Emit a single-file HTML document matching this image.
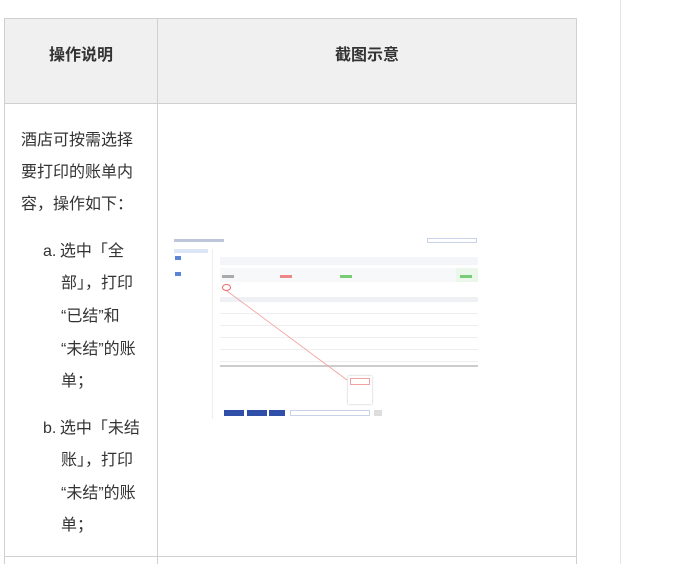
<!DOCTYPE html>
<html><head><meta charset="utf-8"><style>
body{margin:0;width:683px;height:564px;background:#fff;position:relative;overflow:hidden;font-family:"Liberation Sans","Noto Sans CJK SC",sans-serif;color:#333}
.vl{position:absolute;left:620px;top:0;width:1px;height:564px;background:#e5e5e5}
.b{position:absolute;background:#d0d0d0}
.t{position:absolute;font-size:16px;line-height:20px;white-space:nowrap;font-family:"Noto Sans CJK SC","Liberation Sans",sans-serif;color:#333}
.t i{font-style:normal;font-family:"Liberation Sans",sans-serif}
.h{position:absolute;font-size:16px;font-weight:bold;line-height:20px;top:43px;font-family:"Noto Sans CJK SC",sans-serif;color:#333}
</style></head><body>
<div class="vl"></div>
<div style="position:absolute;left:4px;top:18px;width:572px;height:85px;background:#f0f0f0"></div>
<div class="b" style="left:4px;top:18px;width:573px;height:1px"></div>
<div class="b" style="left:4px;top:103px;width:573px;height:1px"></div>
<div class="b" style="left:4px;top:556px;width:573px;height:1px"></div>
<div class="b" style="left:4px;top:18px;width:1px;height:546px"></div>
<div class="b" style="left:157px;top:18px;width:1px;height:546px"></div>
<div class="b" style="left:576px;top:18px;width:1px;height:546px"></div>
<div class="h" style="left:49px">操作说明</div>
<div class="h" style="left:335px">截图示意</div>
<div class="t" style="left:21px;top:128px">酒店可按需选择</div>
<div class="t" style="left:21px;top:160px">要打印的账单内</div>
<div class="t" style="left:21px;top:192px">容，操作如下：</div>
<div class="t" style="left:43px;top:239px"><i>a.</i> 选中「全</div>
<div class="t" style="left:61px;top:271px">部」，打印</div>
<div class="t" style="left:61px;top:304px"><i>“</i>已结<i>”</i>和</div>
<div class="t" style="left:61px;top:337px"><i>“</i>未结<i>”</i>的账</div>
<div class="t" style="left:61px;top:369px">单；</div>
<div class="t" style="left:43px;top:416px"><i>b.</i> 选中「未结</div>
<div class="t" style="left:61px;top:448px">账」，打印</div>
<div class="t" style="left:61px;top:481px"><i>“</i>未结<i>”</i>的账</div>
<div class="t" style="left:61px;top:513px">单；</div>
<div style="position:absolute;left:172px;top:235px;width:306px;height:188px;background:#fff">
 <div style="position:absolute;left:2px;top:4px;width:50px;height:3px;background:#bcc6d8"></div>
 <div style="position:absolute;left:255px;top:3px;width:50px;height:5px;border:1px solid #c8d3ea;box-sizing:border-box"></div>
 <div style="position:absolute;left:2px;top:14px;width:34px;height:4px;background:#dde6f7"></div>
 <div style="position:absolute;left:3px;top:21px;width:6px;height:4px;background:#5b84d9"></div>
 <div style="position:absolute;left:3px;top:37px;width:6px;height:4px;background:#5b84d9"></div>
 <div style="position:absolute;left:40px;top:14px;width:1px;height:170px;background:#eee"></div>
 <div style="position:absolute;left:48px;top:22px;width:258px;height:8px;background:#f3f5f8"></div>
 <div style="position:absolute;left:48px;top:33px;width:258px;height:14px;background:#f7f8fa"></div>
 <div style="position:absolute;left:284px;top:33px;width:22px;height:14px;background:#eaf7ea"></div>
 <div style="position:absolute;left:50px;top:40px;width:12px;height:3px;background:#aaa"></div>
 <div style="position:absolute;left:108px;top:40px;width:12px;height:3px;background:#e88"></div>
 <div style="position:absolute;left:168px;top:40px;width:12px;height:3px;background:#7c7"></div>
 <div style="position:absolute;left:288px;top:40px;width:12px;height:3px;background:#7c7"></div>
 <div style="position:absolute;left:50px;top:49px;width:7px;height:5px;border:1px solid #e66;border-radius:50%"></div>
 <div style="position:absolute;left:48px;top:62px;width:258px;height:5px;background:#eef0f4"></div>
 <div style="position:absolute;left:48px;top:67px;width:258px;height:63px;background:repeating-linear-gradient(#fff 0 11px,#eee 11px 12px)"></div>
 <div style="position:absolute;left:48px;top:130px;width:258px;height:2px;background:#ccc"></div>
 <svg style="position:absolute;left:0;top:0" width="306" height="188"><line x1="55" y1="56" x2="175" y2="145" stroke="#f2a0a0" stroke-width="0.8"/></svg>
 <div style="position:absolute;left:176px;top:141px;width:24px;height:28px;background:#fff;box-shadow:0 0 2px #bbb"></div>
 <div style="position:absolute;left:178px;top:143px;width:18px;height:5px;border:1px solid #f2a0a0"></div>
 <div style="position:absolute;left:52px;top:175px;width:20px;height:6px;background:#2f4fa8"></div>
 <div style="position:absolute;left:75px;top:175px;width:20px;height:6px;background:#2f4fa8"></div>
 <div style="position:absolute;left:97px;top:175px;width:16px;height:6px;background:#2f4fa8"></div>
 <div style="position:absolute;left:118px;top:175px;width:80px;height:6px;border:1px solid #c8d3ea;box-sizing:border-box"></div>
 <div style="position:absolute;left:202px;top:175px;width:8px;height:6px;background:#ddd"></div>
</div>
</body></html>
